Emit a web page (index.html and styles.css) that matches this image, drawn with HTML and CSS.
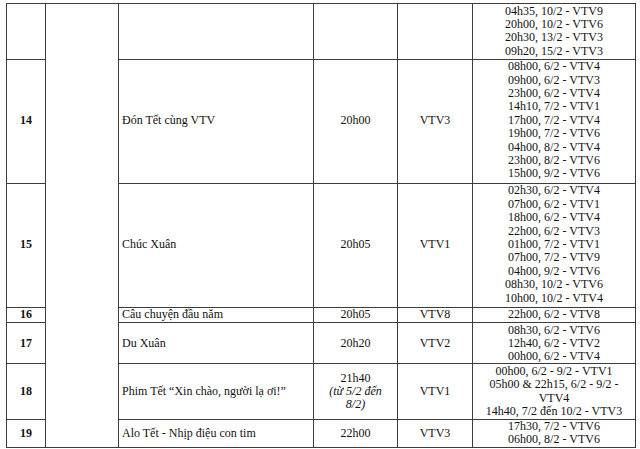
FILE: index.html
```html
<!DOCTYPE html>
<html lang="vi">
<head>
<meta charset="utf-8">
<link rel="stylesheet" href="styles.css">
</head>
<body>
<table class="schedule">
  <colgroup>
    <col class="c-no"><col class="c-group"><col class="c-name"><col class="c-time"><col class="c-ch"><col class="c-re">
  </colgroup>
  <tr>
    <td class="no"></td>
    <td class="group" rowspan="7"></td>
    <td class="name"></td>
    <td class="mid"></td>
    <td class="mid"></td>
    <td class="mid">04h35, 10/2 - VTV9<br>20h00, 10/2 - VTV6<br>20h30, 13/2 - VTV3<br>09h20, 15/2 - VTV3</td>
  </tr>
  <tr class="tall">
    <td class="no">14</td>
    <td class="name">Đón Tết cùng VTV</td>
    <td class="mid">20h00</td>
    <td class="mid">VTV3</td>
    <td class="mid">08h00, 6/2 - VTV4<br>09h00, 6/2 - VTV3<br>23h00, 6/2 - VTV4<br>14h10, 7/2 - VTV1<br>17h00, 7/2 - VTV4<br>19h00, 7/2 - VTV6<br>04h00, 8/2 - VTV4<br>23h00, 8/2 - VTV6<br>15h00, 9/2 - VTV6</td>
  </tr>
  <tr class="tall">
    <td class="no">15</td>
    <td class="name">Chúc Xuân</td>
    <td class="mid">20h05</td>
    <td class="mid">VTV1</td>
    <td class="mid">02h30, 6/2 - VTV4<br>07h00, 6/2 - VTV1<br>18h00, 6/2 - VTV4<br>22h00, 6/2 - VTV3<br>01h00, 7/2 - VTV1<br>07h00, 7/2 - VTV9<br>04h00, 9/2 - VTV6<br>08h30, 10/2 - VTV6<br>10h00, 10/2 - VTV4</td>
  </tr>
  <tr>
    <td class="no">16</td>
    <td class="name">Câu chuyện đầu năm</td>
    <td class="mid">20h05</td>
    <td class="mid">VTV8</td>
    <td class="mid">22h00, 6/2 - VTV8</td>
  </tr>
  <tr class="tight">
    <td class="no">17</td>
    <td class="name">Du Xuân</td>
    <td class="mid">20h20</td>
    <td class="mid">VTV2</td>
    <td class="mid">08h30, 6/2 - VTV6<br>12h40, 6/2 - VTV2<br>00h00, 6/2 - VTV4</td>
  </tr>
  <tr>
    <td class="no">18</td>
    <td class="name">Phim Tết “Xin chào, người lạ ơi!”</td>
    <td class="mid">21h40<br><em>(từ 5/2 đến<br>8/2)</em></td>
    <td class="mid">VTV1</td>
    <td class="mid">00h00, 6/2 - 9/2 - VTV1<br>05h00 &amp; 22h15, 6/2 - 9/2 -<br>VTV4<br>14h40, 7/2 đến 10/2 - VTV3</td>
  </tr>
  <tr class="tight">
    <td class="no">19</td>
    <td class="name">Alo Tết - Nhịp điệu con tim</td>
    <td class="mid">22h00</td>
    <td class="mid">VTV3</td>
    <td class="mid">17h30, 7/2 - VTV6<br>06h00, 8/2 - VTV6</td>
  </tr>
</table>
</body>
</html>
```
FILE: styles.css
```css
html, body {
  margin: 0;
  padding: 0;
  background: #ffffff;
}
body {
  padding: 3px 0 0 6px;
  font-family: "Liberation Serif", "Times New Roman", serif;
  font-size: 12px;
  color: #111;
}
.schedule {
  border-collapse: collapse;
  table-layout: fixed;
  width: 629px;
}
.c-no { width: 39px; }
.c-group { width: 73px; }
.c-name { width: 195px; }
.c-time { width: 84px; }
.c-ch { width: 75px; }
.c-re { width: 163px; }
.schedule td {
  border: 1px solid #3c3c3c;
  padding: 0.5px 2px;
  line-height: 13.4px;
  vertical-align: middle;
}
.schedule tr.tall td {
  padding-bottom: 2px;
}
.schedule tr.tight td {
  line-height: 13px;
}
.schedule td.no {
  text-align: center;
  font-weight: bold;
}
.schedule td.name {
  text-align: left;
  padding-left: 3px;
}
.schedule td.mid {
  text-align: center;
}
.schedule em {
  font-style: italic;
}
```
